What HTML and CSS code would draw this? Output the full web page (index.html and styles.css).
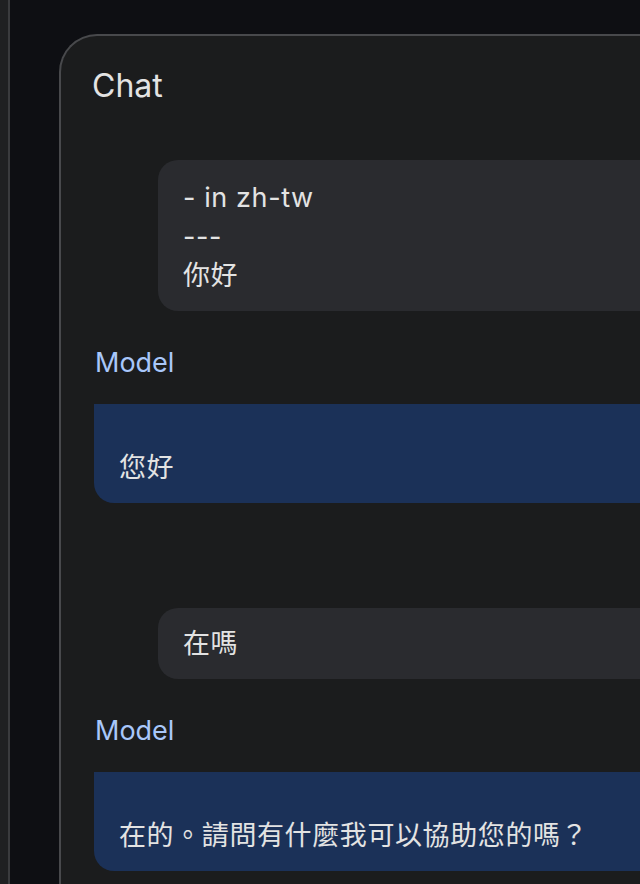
FILE: index.html
```html
<!DOCTYPE html>
<html lang="zh-Hant">
<head>
    <meta charset="UTF-8">
    <meta name="viewport" content="width=device-width, initial-scale=1.0">
    <title>Chat</title>
    <link rel="stylesheet" href="styles.css">
</head>
<body>
    <div class="sidebar"></div>

    <main class="main">
        <section class="chat-card">
            <h2 class="chat-title">Chat</h2>

            <div class="turn user">
                <div class="bubble user-bubble multi">
                    <p>- in zh-tw</p>
                    <p>---</p>
                    <p>你好</p>
                </div>
            </div>

            <div class="turn model">
                <div class="role">Model</div>
                <div class="bubble model-bubble">
                    <p>您好</p>
                </div>
            </div>

            <div class="turn user spaced">
                <div class="bubble user-bubble">
                    <p>在嗎</p>
                </div>
            </div>

            <div class="turn model">
                <div class="role">Model</div>
                <div class="bubble model-bubble">
                    <p>在的。請問有什麼我可以協助您的嗎？</p>
                </div>
            </div>
        </section>
    </main>
</body>
</html>
```

FILE: styles.css
```css
* {
    margin: 0;
    padding: 0;
    box-sizing: border-box;
}

html, body {
    height: 100%;
}

body {
    font-family: 'Inter', 'Noto Sans CJK TC', sans-serif;
    background: #0e0f13;
    color: #e3e3e3;
    display: flex;
    overflow: hidden;
}

.sidebar {
    width: 10px;
    flex-shrink: 0;
    background: #1f2022;
    border-right: 2px solid #3a3b3e;
}

.main {
    flex: 1;
    padding: 34px 0 0 49px;
    overflow: hidden;
}

.chat-card {
    width: 800px;
    min-height: 900px;
    background: #1b1c1d;
    border-top: 2px solid #48494c;
    border-left: 2px solid #48494c;
    border-top-left-radius: 38px;
    padding: 32px 0 0 33px;
}

.chat-title {
    font-size: 32px;
    font-weight: 400;
    line-height: 36px;
    color: #e3e3e3;
    margin-bottom: 56px;
    margin-left: -2px;
}

.turn.user {
    padding-left: 64px;
}

.turn.user.spaced {
    margin-top: 105px;
}

.bubble {
    font-size: 27px;
    line-height: 39px;
    letter-spacing: 0.6px;
    padding-left: 25px;
}

.user-bubble {
    background: #2a2b2f;
    border-radius: 20px 0 0 20px;
    padding-top: 16px;
    padding-bottom: 16px;
}

.user-bubble.multi {
    padding-top: 18px;
    padding-bottom: 16px;
}

.role {
    margin-top: 36px;
    margin-bottom: 25px;
    font-size: 27px;
    line-height: 32px;
    color: #a8c7fa;
    padding-left: 1px;
}

.model-bubble {
    background: #1b3158;
    border-bottom-left-radius: 20px;
    padding-top: 44px;
    padding-bottom: 16px;
}
```
